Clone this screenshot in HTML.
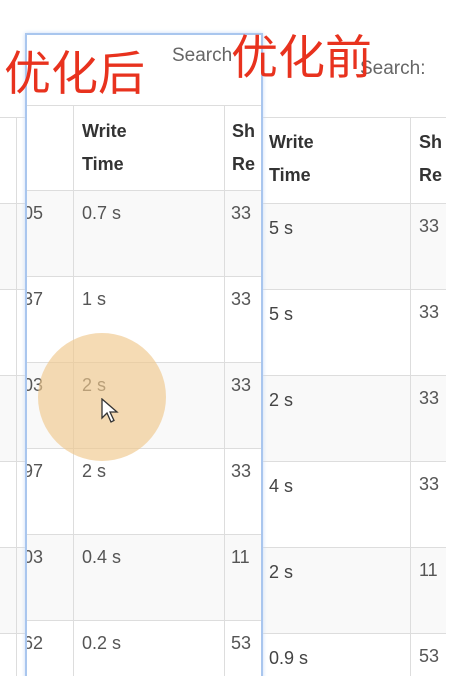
<!DOCTYPE html>
<html style="width:472px;height:676px;overflow:hidden"><head><meta charset="utf-8"><style>
*{margin:0;padding:0;box-sizing:border-box}
body{width:472px;height:676px;overflow:hidden;background:#fff;position:relative;font-family:"Liberation Sans",Arial,sans-serif;color:#333}
.a{position:absolute}
.h{position:absolute;height:1px;background:#ddd}
.v{position:absolute;width:1px;background:#ddd}
.g{position:absolute;background:#f9f9f9}
.t{position:absolute;font-size:18px;color:#444;white-space:nowrap}
.b{font-weight:bold;color:#333;line-height:33px}
.cn{position:absolute;color:#e8321e;font-family:"Liberation Sans","Noto Sans CJK SC",sans-serif;font-size:47px;line-height:1;white-space:nowrap}
</style></head><body>
<div class="h" style="left:0;top:117px;width:25px"></div>
<div class="g" style="left:0;top:203px;width:25px;height:86px"></div>
<div class="g" style="left:0;top:375px;width:25px;height:86px"></div>
<div class="g" style="left:0;top:547px;width:25px;height:86px"></div>
<div class="h" style="left:0;top:203px;width:25px"></div>
<div class="h" style="left:0;top:289px;width:25px"></div>
<div class="h" style="left:0;top:375px;width:25px"></div>
<div class="h" style="left:0;top:461px;width:25px"></div>
<div class="h" style="left:0;top:547px;width:25px"></div>
<div class="h" style="left:0;top:633px;width:25px"></div>
<div class="v" style="left:16px;top:117px;height:560px"></div>

<div class="g" style="left:262px;top:203px;width:184px;height:86px"></div>
<div class="g" style="left:262px;top:375px;width:184px;height:86px"></div>
<div class="g" style="left:262px;top:547px;width:184px;height:86px"></div>
<div class="h" style="left:262px;top:117px;width:184px"></div>
<div class="h" style="left:262px;top:203px;width:184px"></div>
<div class="h" style="left:262px;top:289px;width:184px"></div>
<div class="h" style="left:262px;top:375px;width:184px"></div>
<div class="h" style="left:262px;top:461px;width:184px"></div>
<div class="h" style="left:262px;top:547px;width:184px"></div>
<div class="h" style="left:262px;top:633px;width:184px"></div>
<div class="v" style="left:410px;top:117px;height:560px"></div>
<div class="t b" style="left:269px;top:126px">Write<br>Time</div>
<div class="t b" style="left:419px;top:126px;width:27px;overflow:hidden">Sh<br>Re</div>
<div class="t" style="left:269px;top:218px">5 s</div>
<div class="t" style="left:269px;top:304px">5 s</div>
<div class="t" style="left:269px;top:390px">2 s</div>
<div class="t" style="left:269px;top:476px">4 s</div>
<div class="t" style="left:269px;top:562px">2 s</div>
<div class="t" style="left:269px;top:648px">0.9 s</div>
<div class="a" style="left:419px;top:183px;width:27px;overflow:hidden;font-size:18px;color:#555;line-height:86px">33<br>33<br>33<br>33<br>11<br>53</div>
<div class="t" style="left:360px;top:58px;color:#666;font-size:19px">Search:</div>

<div class="a" style="left:25px;top:33px;width:238px;height:660px;background:#fff;border:2px solid #a9c6ee;box-shadow:0 0 4px #c8dcf6;overflow:hidden">
 <div class="g" style="left:0;top:155px;width:240px;height:86px"></div>
 <div class="g" style="left:0;top:327px;width:240px;height:86px"></div>
 <div class="g" style="left:0;top:499px;width:240px;height:86px"></div>
 <div class="h" style="left:0;top:70px;width:240px"></div>
 <div class="h" style="left:0;top:155px;width:240px"></div>
 <div class="h" style="left:0;top:241px;width:240px"></div>
 <div class="h" style="left:0;top:327px;width:240px"></div>
 <div class="h" style="left:0;top:413px;width:240px"></div>
 <div class="h" style="left:0;top:499px;width:240px"></div>
 <div class="h" style="left:0;top:585px;width:240px"></div>
 <div class="v" style="left:46px;top:70px;height:600px"></div>
 <div class="v" style="left:197px;top:70px;height:600px"></div>
 <div class="t" style="left:145px;top:10px;color:#666;font-size:19px">Search</div>
 <div class="t b" style="left:55px;top:80px">Write<br>Time</div>
 <div class="t b" style="left:205px;top:80px">Sh<br>Re</div>
 <div class="a" style="left:-4px;top:135px;font-size:18px;color:#555;line-height:86px">05<br>37<br>03<br>97<br>03<br>62</div>
 <div class="a" style="left:55px;top:135px;font-size:18px;color:#555;line-height:86px">0.7 s<br>1 s<br>2 s<br>2 s<br>0.4 s<br>0.2 s</div>
 <div class="a" style="left:204px;top:135px;font-size:18px;color:#555;line-height:86px">33<br>33<br>33<br>33<br>11<br>53</div>
</div>

<div class="a" style="left:38px;top:333px;width:128px;height:128px;border-radius:50%;background:rgba(240,200,140,0.65)"></div>
<svg class="a" style="left:101px;top:398px" width="20" height="28" viewBox="0 0 20 28"><path d="M1 1 L1 20 L6 15 L10 24 L13 22.5 L9 14 L16 14 Z" fill="#fff" stroke="#333" stroke-width="1.3"/></svg>

<div class="cn" style="left:4px;top:50px">优化后</div>
<div class="cn" style="left:231px;top:34px">优化前</div>
</body></html>
